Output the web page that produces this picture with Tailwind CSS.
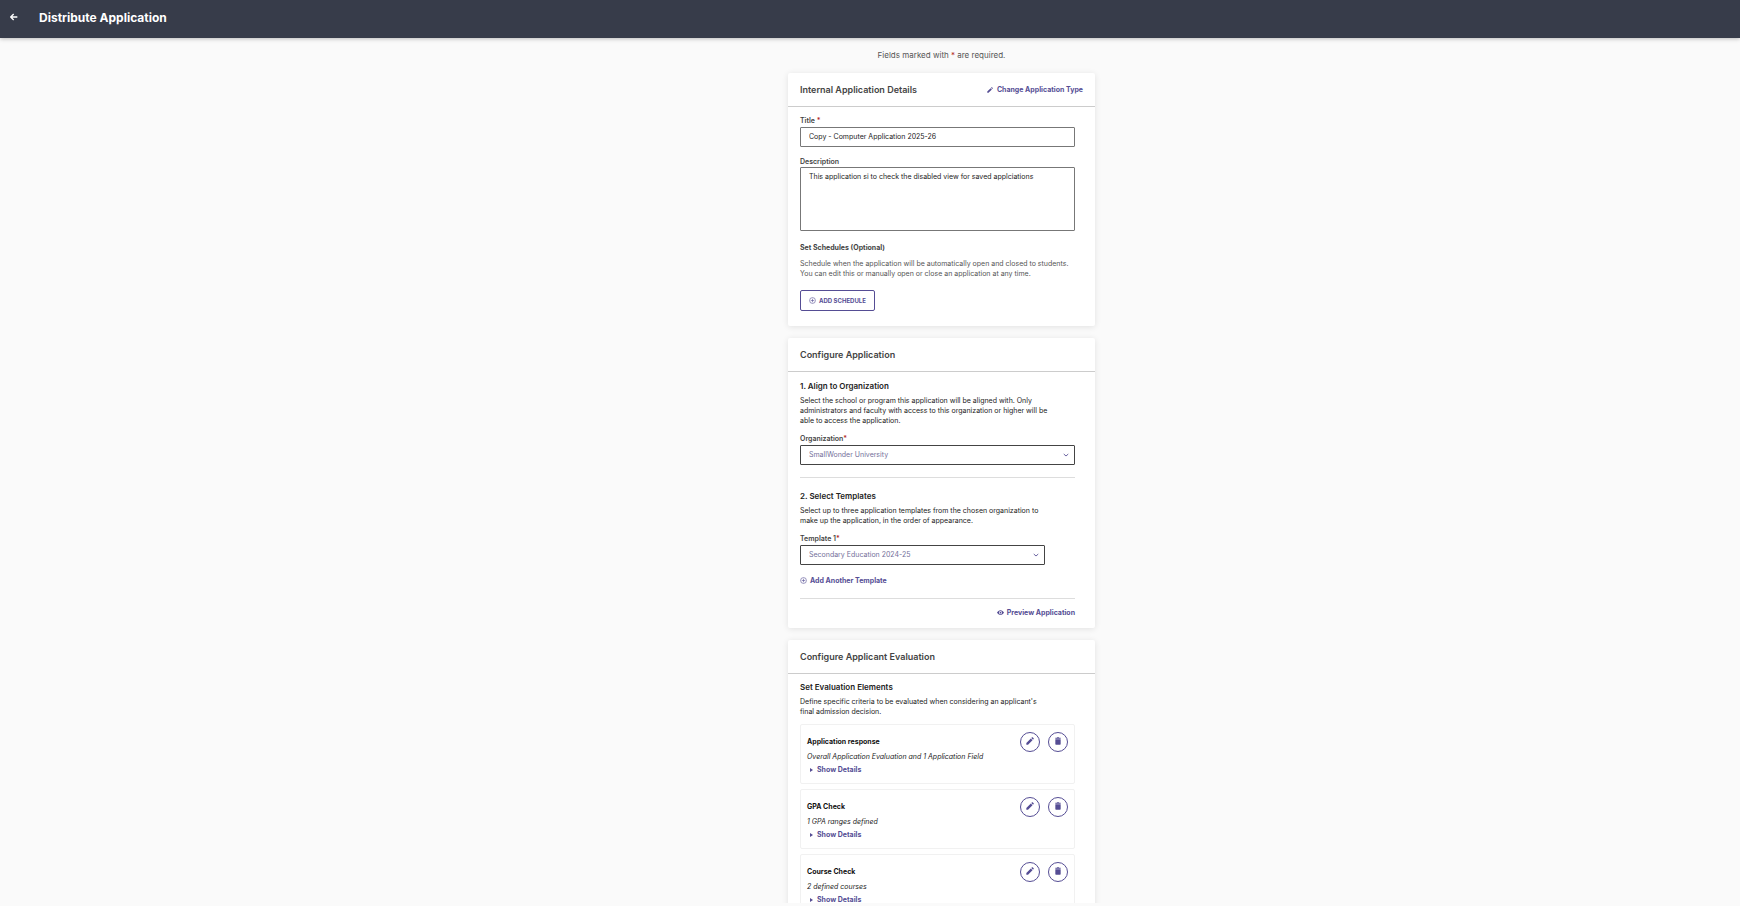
<!DOCTYPE html>
<html lang="en">
<head>
    <meta charset="UTF-8">
    <meta name="viewport" content="width=device-width, initial-scale=1.0">
    <title>Distribute Application</title>
    <script src="https://cdn.jsdelivr.net/npm/@tailwindcss/browser@4"></script>
</head>
<body class="flex h-screen flex-col overflow-hidden bg-[#fafafa] pb-[3px] font-['Inter',sans-serif] text-[7px] leading-[10px] text-[#222]">
    <!-- Icons -->
    <svg class="hidden">
        <symbol id="icon-pencil" viewBox="0 0 24 24"><path d="M1 18v5h5L19.500 9.500l-5-5L1 18zM23 6c.6-.6.6-1.400 0-2l-3-3c-.6-.6-1.400-.6-2 0L16 3l5 5 2-2z"/></symbol>
        <symbol id="icon-trash" viewBox="0 0 18 24"><path d="M1 7h16v14a2 2 0 0 1-2 2H3a2 2 0 0 1-2-2V7zM5.500 2l1-1h5l1 1H17v3H1V2z"/></symbol>
        <symbol id="icon-plus" viewBox="0 0 24 24"><path fill="none" stroke="currentColor" stroke-width="2" d="M12 2a10 10 0 1 0 0 20 10 10 0 0 0 0-20zM12 6v12M6 12h12"/></symbol>
        <symbol id="icon-eye" viewBox="0 0 24 24"><path fill-rule="evenodd" d="M12 4C7 4 2.700 7.300 0 12c2.700 4.700 7 8 12 8s9.300-3.300 12-8c-2.700-4.700-7-8-12-8zm0 13.500a5.500 5.500 0 1 1 0-11 5.500 5.500 0 0 1 0 11zm0-2.500a3 3 0 1 0 0-6 3 3 0 0 0 0 6z"/></symbol>
        <symbol id="icon-chevron" viewBox="0 0 24 24"><path fill="none" stroke="currentColor" stroke-width="3.500" d="M3 8l9 8 9-8"/></symbol>
    </svg>

    <header class="relative z-10 flex h-[38px] shrink-0 items-center bg-[#373c4a] pb-[2px] pl-[10px] text-white shadow-[0_1px_4px_rgba(0,0,0,0.25)]">
        <button aria-label="Back" class="mr-[21px] mb-[2px]">
            <svg class="size-2" viewBox="0 0 24 24" fill="none" stroke="currentColor" stroke-width="4"><path d="M22 12H3M11 3L2 12l9 9"/></svg>
        </button>
        <h1 class="text-[12px] leading-4 font-bold">Distribute Application</h1>
    </header>

    <main class="flex min-h-0 flex-1 flex-col items-center overflow-hidden pt-3 pl-[143px]">
        <p class="mb-[13px] text-[8px] text-[#555]">Fields marked with <span class="text-[#b3261e]">*</span> are required.</p>

        <div class="flex w-full max-w-[307px] flex-col gap-3">
            <section class="rounded-[2px] bg-white pb-[15px] shadow-[0_1px_6px_rgba(0,0,0,0.1)]">
                <div class="flex h-[34px] items-center justify-between border-b border-[#ccc] px-3">
                    <h2 class="text-[9px] font-semibold text-[#444]">Internal Application Details</h2>
                    <a href="#" class="flex items-center gap-1 font-bold text-[#554d94]">
                        <svg class="size-[6px] fill-current"><use href="#icon-pencil"/></svg>
                        Change Application Type
                    </a>
                </div>
                <div class="flex flex-col pt-[9px] pr-5 pl-3">
                    <label for="title" class="mb-[1px] font-semibold text-[#444]">Title <span class="text-[#b3261e]">*</span></label>
                    <input id="title" type="text" value="Copy - Computer Application 2025-26" class="h-5 rounded-[1px] border border-[#777] px-2 pb-[1px]">
                    <label for="description" class="mt-[10px] font-semibold text-[#444]">Description</label>
                    <textarea id="description" class="h-16 resize-none rounded-[1px] border border-[#777] px-2 py-1">This application si to check the disabled view for saved applciations</textarea>
                    <h3 class="mt-3 font-bold text-[#444]">Set Schedules (Optional)</h3>
                    <p class="mt-[6px] text-[#555]">Schedule when the application will be automatically open and closed to students.<br>You can edit this or manually open or close an application at any time.</p>
                    <button class="mt-[11px] flex h-[21px] items-center gap-[3px] self-start rounded-[2px] border border-[#554d94] px-2 text-[6px] font-bold text-[#554d94]">
                        <svg class="size-[7px]"><use href="#icon-plus"/></svg>
                        ADD SCHEDULE
                    </button>
                </div>
            </section>

            <section class="rounded-[2px] bg-white pb-[10px] shadow-[0_1px_6px_rgba(0,0,0,0.1)]">
                <div class="flex h-[34px] items-center border-b border-[#ccc] px-3">
                    <h2 class="text-[9px] font-semibold text-[#444]">Configure Application</h2>
                </div>
                <div class="flex flex-col pt-[9px] pr-5 pl-3">
                    <h3 class="mb-[5px] text-[8px] font-semibold">1. Align to Organization</h3>
                    <p>Select the school or program this application will be aligned with. Only<br>administrators and faculty with access to this organization or higher will be<br>able to access the application.</p>
                    <label for="organization" class="mt-2 mb-[1px] font-semibold text-[#444]">Organization<span class="text-[#b3261e]">*</span></label>
                    <div class="relative">
                        <select id="organization" class="block h-5 w-full appearance-none rounded-[1px] border border-[#444] px-2 text-[#74709a]">
                            <option>SmallWonder University</option>
                        </select>
                        <svg class="pointer-events-none absolute top-[7px] right-[6px] size-[6px] text-[#554d94]"><use href="#icon-chevron"/></svg>
                    </div>
                    <hr class="mt-3 mb-[13px] border-[#ddd]">
                    <h3 class="mb-[5px] text-[8px] font-semibold">2. Select Templates</h3>
                    <p>Select up to three application templates from the chosen organization to<br>make up the application, in the order of appearance.</p>
                    <label for="template" class="mt-2 mb-[1px] font-semibold text-[#444]">Template 1<span class="text-[#b3261e]">*</span></label>
                    <div class="relative mr-[30px]">
                        <select id="template" class="block h-5 w-full appearance-none rounded-[1px] border border-[#444] px-2 text-[#74709a]">
                            <option>Secondary Education 2024-25</option>
                        </select>
                        <svg class="pointer-events-none absolute top-[7px] right-[6px] size-[6px] text-[#554d94]"><use href="#icon-chevron"/></svg>
                    </div>
                    <button class="mt-[11px] flex items-center gap-[3px] self-start font-bold text-[#554d94]">
                        <svg class="mb-[1px] size-[7px]"><use href="#icon-plus"/></svg>
                        Add Another Template
                    </button>
                    <hr class="mt-3 mb-[9px] border-[#ddd]">
                    <a href="#" class="flex items-center gap-[3px] self-end font-bold text-[#554d94]">
                        <svg class="mb-[1px] size-[7px] fill-current"><use href="#icon-eye"/></svg>
                        Preview Application
                    </a>
                </div>
            </section>

            <section class="rounded-[2px] bg-white pb-[10px] shadow-[0_1px_6px_rgba(0,0,0,0.1)]">
                <div class="flex h-[34px] items-center border-b border-[#ccc] px-3">
                    <h2 class="text-[9px] font-semibold text-[#444]">Configure Applicant Evaluation</h2>
                </div>
                <div class="flex flex-col pt-2 pr-5 pl-3">
                    <h3 class="mb-[5px] text-[8px] font-semibold">Set Evaluation Elements</h3>
                    <p>Define specific criteria to be evaluated when considering an applicant's<br>final admission decision.</p>
                    <ul class="mt-[7px] flex flex-col gap-[5px]">
                        <li class="flex h-[60px] justify-between rounded-[2px] border border-[#f1f1f1] px-[6px] pt-[7px]">
                            <div class="pt-[5px]">
                                <h4 class="font-bold text-[#111]">Application response</h4>
                                <p class="mt-[5px] italic">Overall Application Evaluation and 1 Application Field</p>
                                <button class="mt-[3px] ml-[3px] flex items-center gap-1 font-bold text-[#554d94]">
                                    <svg class="h-1 w-[3px] fill-current" viewBox="0 0 3 4"><path d="M0 0l3 2-3 2z"/></svg>
                                    Show Details
                                </button>
                            </div>
                            <div class="flex gap-2">
                                <button aria-label="Edit" class="flex size-5 items-center justify-center rounded-full border border-[#554d94] pb-[2px] text-[#554d94]"><svg class="size-2 fill-current"><use href="#icon-pencil"/></svg></button>
                                <button aria-label="Delete" class="flex size-5 items-center justify-center rounded-full border border-[#554d94] pb-[2px] text-[#554d94]"><svg class="h-2 w-[6px] fill-current"><use href="#icon-trash"/></svg></button>
                            </div>
                        </li>
                        <li class="flex h-[60px] justify-between rounded-[2px] border border-[#f1f1f1] px-[6px] pt-[7px]">
                            <div class="pt-[5px]">
                                <h4 class="font-bold text-[#111]">GPA Check</h4>
                                <p class="mt-[5px] italic">1 GPA ranges defined</p>
                                <button class="mt-[3px] ml-[3px] flex items-center gap-1 font-bold text-[#554d94]">
                                    <svg class="h-1 w-[3px] fill-current" viewBox="0 0 3 4"><path d="M0 0l3 2-3 2z"/></svg>
                                    Show Details
                                </button>
                            </div>
                            <div class="flex gap-2">
                                <button aria-label="Edit" class="flex size-5 items-center justify-center rounded-full border border-[#554d94] pb-[2px] text-[#554d94]"><svg class="size-2 fill-current"><use href="#icon-pencil"/></svg></button>
                                <button aria-label="Delete" class="flex size-5 items-center justify-center rounded-full border border-[#554d94] pb-[2px] text-[#554d94]"><svg class="h-2 w-[6px] fill-current"><use href="#icon-trash"/></svg></button>
                            </div>
                        </li>
                        <li class="flex h-[60px] justify-between rounded-[2px] border border-[#f1f1f1] px-[6px] pt-[7px]">
                            <div class="pt-[5px]">
                                <h4 class="font-bold text-[#111]">Course Check</h4>
                                <p class="mt-[5px] italic">2 defined courses</p>
                                <button class="mt-[3px] ml-[3px] flex items-center gap-1 font-bold text-[#554d94]">
                                    <svg class="h-1 w-[3px] fill-current" viewBox="0 0 3 4"><path d="M0 0l3 2-3 2z"/></svg>
                                    Show Details
                                </button>
                            </div>
                            <div class="flex gap-2">
                                <button aria-label="Edit" class="flex size-5 items-center justify-center rounded-full border border-[#554d94] pb-[2px] text-[#554d94]"><svg class="size-2 fill-current"><use href="#icon-pencil"/></svg></button>
                                <button aria-label="Delete" class="flex size-5 items-center justify-center rounded-full border border-[#554d94] pb-[2px] text-[#554d94]"><svg class="h-2 w-[6px] fill-current"><use href="#icon-trash"/></svg></button>
                            </div>
                        </li>
                    </ul>
                </div>
            </section>
        </div>
    </main>
</body>
</html>
